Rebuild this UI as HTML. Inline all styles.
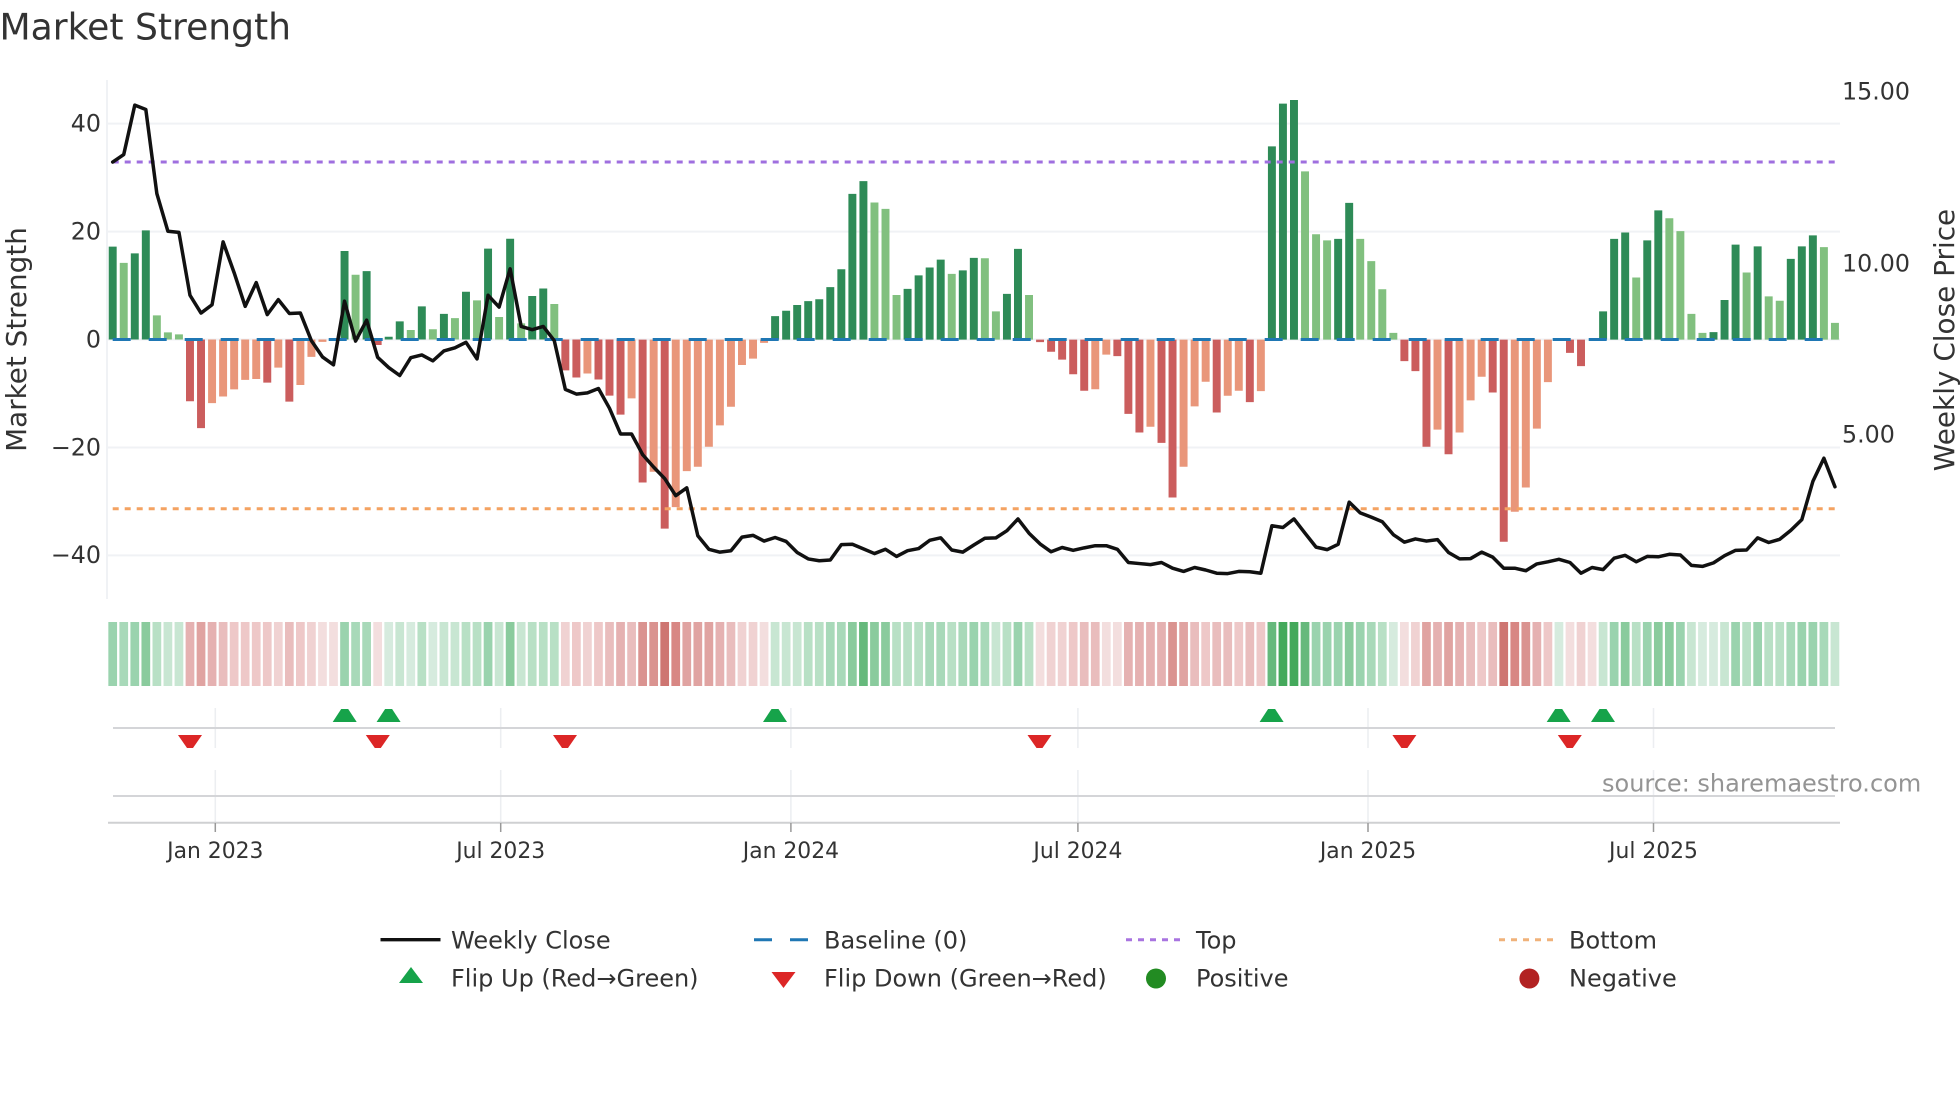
<!DOCTYPE html>
<html lang="en">
<head>
<meta charset="utf-8">
<title>Market Strength</title>
<style>
html,body{margin:0;padding:0;background:#fff;width:1960px;height:1102px;overflow:hidden}
svg{display:block}
text{font-family:"DejaVu Sans","Liberation Sans",sans-serif;fill:#333}
text.src{fill:#949494}
</style>
</head>
<body>
<svg width="1960" height="1102" viewBox="0 0 1960 1102" xmlns="http://www.w3.org/2000/svg">
<rect width="1960" height="1102" fill="#fff"/>
<text x="-0.5" y="39.5" font-size="36.1">Market Strength</text>

<!-- grid -->
<g stroke="#f0f2f5" stroke-width="2" fill="none">
<path d="M107 80V599"/>
<path d="M108 123.6H1840M108 231.6H1840M108 447.5H1840M108 555.4H1840M108 339.5H1840"/>
</g>

<!-- bars section 1 -->
<g transform="matrix(11.04 0 0 .39526 112.7 0)" fill="none" stroke-width=".72">
<path stroke="#2e8b57" d="M0 859V624M2 859V641M3 859V583M21 859V635M23 859V686M25 859V852M26 859V813M28 859V775M30 859V794M32 859V738M34 859V629M36 859V604M38 859V749M39 859V730"/>
<path stroke="#81c07f" d="M1 859V665M4 859V798M5 859V841M6 859V846M22 859V695M27 859V835M29 859V833M31 859V805M33 859V760M35 859V802M37 859V818M40 859V769"/>
<path stroke="#cb5d5d" d="M7 859V1015M8 859V1083M14 859V968M16 859V1016M24 859V873M41 859V937M42 859V955M44 859V960M45 859V1001M46 859V1049"/>
<path stroke="#e9967a" d="M9 859V1020M10 859V1003M11 859V985M12 859V961M13 859V959M15 859V930M17 859V974M18 859V903M19 859V865M43 859V945M47 859V1008"/>
</g>
<!-- bars section 2 -->
<g transform="matrix(11.04 0 0 .35714 112.7 60)" fill="none" stroke-width=".72">
<path stroke="#2e8b57" d="M60 783V717M61 783V702M62 783V686M63 783V675M64 783V670M65 783V636M66 783V586M67 783V375M68 783V339M72 783V641M73 783V603M74 783V581M75 783V559M77 783V589M78 783V554M81 783V655M82 783V529M105 783V242M106 783V122M107 783V112M111 783V501M112 783V400M135 783V704M136 783V501M137 783V483M139 783V505M140 783V421M145 783V762M146 783V672M147 783V517M149 783V522M152 783V557M153 783V522M154 783V491"/>
<path stroke="#81c07f" d="M69 783V399M70 783V417M71 783V658M76 783V599M79 783V555M80 783V704M83 783V658M108 783V312M109 783V488M110 783V505M113 783V501M114 783V563M115 783V642M116 783V764M138 783V609M141 783V443M142 783V479M143 783V711M144 783V764M148 783V595M150 783V662M151 783V674M155 783V524M156 783V736"/>
<path stroke="#cb5d5d" d="M48 783V1183M50 783V1312M84 783V790M85 783V817M86 783V839M87 783V880M88 783V926M91 783V829M92 783V991M93 783V1043M95 783V1072M96 783V1225M100 783V987M103 783V958M117 783V843M118 783V871M119 783V1083M121 783V1104M125 783V931M126 783V1349M132 783V820M133 783V857"/>
<path stroke="#e9967a" d="M49 783V1153M51 783V1252M52 783V1151M53 783V1139M54 783V1083M55 783V1023M56 783V971M57 783V854M58 783V836M59 783V792M89 783V922M90 783V825M94 783V1027M97 783V1139M98 783V970M99 783V901M101 783V940M102 783V926M104 783V927M120 783V1035M122 783V1043M123 783V953M124 783V887M127 783V1265M128 783V1197M129 783V1032M130 783V902"/>
</g>

<!-- reference lines -->
<path d="M112.7 339.5H1836" stroke="#1f77b4" stroke-width="3" stroke-dasharray="18 18" fill="none"/>
<path d="M112.7 162H1836" stroke="#9f6fdf" stroke-width="3" stroke-dasharray="6 6" fill="none"/>
<path d="M112.7 508.8H1836" stroke="#f4a261" stroke-width="3" stroke-dasharray="6 6" fill="none"/>

<!-- weekly close line -->
<g fill="none" stroke="#111" stroke-width="3.5" stroke-linejoin="round" stroke-linecap="round">
<path transform="matrix(11.04 0 0 .39526 112.7 0)" vector-effect="non-scaling-stroke" d="M0 410L1 391 2 266 3 277 4 490 5 585 6 588 7 747 8 792 9 771 10 612 11 690 12 775 13 715 14 796 15 758 16 793 17 792 18 862 19 903 20 923 21 762 22 863 23 810 24 904 25 930 26 950 27 905 28 898 29 913 30 888 31 880 32 866 33 908 34 747 35 777 36 680 37 826 38 834 39 826 40 862 41 985 42 997 43 994 44 983 45 1033 46 1098 47 1098 48 1150"/>
<path transform="matrix(11.04 0 0 .35714 112.7 60)" vector-effect="non-scaling-stroke" d="M48 1105L49 1140 50 1172 51 1220 52 1198 53 1332 54 1370 55 1378 56 1374 57 1336 58 1331 59 1347 60 1337 61 1348 62 1379 63 1397 64 1402 65 1400 66 1357 67 1356 68 1369 69 1382 70 1370 71 1390 72 1374 73 1368 74 1345 75 1338 76 1372 77 1378 78 1358 79 1339 80 1338 81 1318 82 1285 83 1325 84 1355 85 1377 86 1365 87 1373 88 1366 89 1360 90 1360 91 1370 92 1407 93 1410 94 1413 95 1407 96 1423 97 1432 98 1421 99 1428 100 1437 101 1438 102 1432 103 1433 104 1437 105 1304 106 1309 107 1285 108 1325 109 1364 110 1371 111 1356 112 1238 113 1268 114 1280 115 1293 116 1329 117 1350 118 1341 119 1347 120 1343 121 1379 122 1397 123 1396 124 1378 125 1392 126 1423 127 1423 128 1430 129 1411 130 1405 131 1398 132 1407 133 1437 134 1421 135 1427 136 1395 137 1387 138 1405 139 1390 140 1391 141 1384 142 1386 143 1415 144 1418 145 1408 146 1388 147 1373 148 1372 149 1338 150 1351 151 1342 152 1317 153 1287 154 1180 155 1115 156 1195"/>
</g>

<!-- y ticks -->
<g font-size="23.75" text-anchor="end">
<text x="101" y="131.6">40</text>
<text x="101" y="239.6">20</text>
<text x="101" y="347.5">0</text>
<text x="101" y="455.6">−20</text>
<text x="101" y="563.2">−40</text>
</g>
<text transform="translate(26 339.5) rotate(-90)" font-size="27.8" text-anchor="middle">Market Strength</text>
<g font-size="23.75">
<text x="1842" y="99.5">15.00</text>
<text x="1842" y="271.4">10.00</text>
<text x="1842" y="442.6">5.00</text>
</g>
<text transform="translate(1954 340) rotate(-90)" font-size="27.9" text-anchor="middle">Weekly Close Price</text>

<!-- heat strip -->
<g transform="translate(112.7 0) scale(11.04 1)" fill="none" stroke-width=".79">
<path stroke="#d6ebde" d="M25 622v64M27 622v64M29 622v64M116 622v64M131 622v64M144 622v64M145 622v64"/>
<path stroke="#c8e6d2" d="M5 622v64M6 622v64M26 622v64M30 622v64M31 622v64M35 622v64M37 622v64M60 622v64M61 622v64M62 622v64M80 622v64M135 622v64M143 622v64M146 622v64M156 622v64"/>
<path stroke="#b8e0c5" d="M4 622v64M28 622v64M32 622v64M33 622v64M38 622v64M39 622v64M40 622v64M63 622v64M64 622v64M71 622v64M72 622v64M73 622v64M76 622v64M81 622v64M83 622v64M115 622v64M138 622v64M148 622v64M150 622v64M151 622v64"/>
<path stroke="#a8d9b9" d="M1 622v64M22 622v64M23 622v64M65 622v64M66 622v64M74 622v64M75 622v64M77 622v64M79 622v64M114 622v64M152 622v64M155 622v64"/>
<path stroke="#9ad3ae" d="M0 622v64M2 622v64M21 622v64M34 622v64M78 622v64M82 622v64M109 622v64M110 622v64M111 622v64M113 622v64M136 622v64M139 622v64M142 622v64M147 622v64M149 622v64M153 622v64M154 622v64"/>
<path stroke="#8acb9d" d="M3 622v64M36 622v64M67 622v64M69 622v64M70 622v64M112 622v64M137 622v64M140 622v64M141 622v64"/>
<path stroke="#66b97c" d="M68 622v64M105 622v64M108 622v64"/>
<path stroke="#44a95b" d="M106 622v64M107 622v64"/>
<path stroke="#f3dede" d="M19 622v64M20 622v64M24 622v64M59 622v64M84 622v64M90 622v64M91 622v64M117 622v64M132 622v64M134 622v64"/>
<path stroke="#f0d2d2" d="M15 622v64M18 622v64M41 622v64M43 622v64M57 622v64M58 622v64M85 622v64M86 622v64M118 622v64M133 622v64"/>
<path stroke="#eec8c8" d="M11 622v64M12 622v64M13 622v64M14 622v64M17 622v64M42 622v64M44 622v64M87 622v64M99 622v64M102 622v64M104 622v64M124 622v64M130 622v64"/>
<path stroke="#e9bdbd" d="M10 622v64M16 622v64M45 622v64M47 622v64M56 622v64M88 622v64M89 622v64M98 622v64M100 622v64M101 622v64M103 622v64M123 622v64M125 622v64"/>
<path stroke="#e5b1b1" d="M7 622v64M9 622v64M46 622v64M55 622v64M92 622v64M93 622v64M94 622v64M95 622v64M120 622v64M122 622v64M129 622v64"/>
<path stroke="#e0a3a1" d="M8 622v64M52 622v64M53 622v64M54 622v64M97 622v64M119 622v64M121 622v64"/>
<path stroke="#da9390" d="M48 622v64M49 622v64M96 622v64M128 622v64"/>
<path stroke="#d88784" d="M51 622v64M127 622v64"/>
<path stroke="#ce7571" d="M50 622v64M126 622v64"/>
</g>

<!-- event panels -->
<g stroke="#eceef1" stroke-width="1.5" fill="none">
<path d="M215.3 708V748M215.3 770V822M500.7 708V748M500.7 770V822M790.9 708V748M790.9 770V822M1077.9 708V748M1077.9 770V822M1368 708V748M1368 770V822M1653.5 708V748M1653.5 770V822"/>
</g>
<path d="M113 728H1835M113 796H1835" stroke="#d4d5d8" stroke-width="2" fill="none"/>
<path d="M108 822.8H1840" stroke="#cfd0d2" stroke-width="2" fill="none"/>
<path d="M215.3 823V832M500.7 823V832M790.9 823V832M1077.9 823V832M1368 823V832M1653.5 823V832" stroke="#999" stroke-width="1.5" fill="none"/>

<g fill="#16a34a">
<polygon transform="translate(344.7 0)" points="-12,722 12,722 3.5,709 -3.5,709"/>
<polygon transform="translate(388.6 0)" points="-12,722 12,722 3.5,709 -3.5,709"/>
<polygon transform="translate(775 0)" points="-12,722 12,722 3.5,709 -3.5,709"/>
<polygon transform="translate(1271.6 0)" points="-12,722 12,722 3.5,709 -3.5,709"/>
<polygon transform="translate(1558.7 0)" points="-12,722 12,722 3.5,709 -3.5,709"/>
<polygon transform="translate(1603 0)" points="-12,722 12,722 3.5,709 -3.5,709"/>
</g>
<g fill="#dc2626">
<polygon transform="translate(190 0)" points="-12,735 12,735 3,748 -3,748"/>
<polygon transform="translate(377.8 0)" points="-12,735 12,735 3,748 -3,748"/>
<polygon transform="translate(565 0)" points="-12,735 12,735 3,748 -3,748"/>
<polygon transform="translate(1039.5 0)" points="-12,735 12,735 3,748 -3,748"/>
<polygon transform="translate(1404.4 0)" points="-12,735 12,735 3,748 -3,748"/>
<polygon transform="translate(1569.8 0)" points="-12,735 12,735 3,748 -3,748"/>
</g>

<text class="src" x="1602" y="791.7" font-size="24">source: sharemaestro.com</text>

<!-- x ticks -->
<g font-size="21.875" text-anchor="middle">
<text x="215.3" y="858">Jan 2023</text>
<text x="500.7" y="858">Jul 2023</text>
<text x="790.9" y="858">Jan 2024</text>
<text x="1077.9" y="858">Jul 2024</text>
<text x="1368" y="858">Jan 2025</text>
<text x="1653.5" y="858">Jul 2025</text>
</g>

<!-- legend -->
<path d="M380.5 939.7H440.5" stroke="#111" stroke-width="3.4" fill="none"/>
<path d="M754 939.7H808" stroke="#1f77b4" stroke-width="3" stroke-dasharray="18 18" fill="none"/>
<path d="M1126 939.7H1181" stroke="#a874e0" stroke-width="3" stroke-dasharray="6 6" fill="none"/>
<path d="M1499 939.7H1555" stroke="#f0b27a" stroke-width="3" stroke-dasharray="6 6" fill="none"/>
<polygon points="399,983 423,983 411,967" fill="#16a34a"/>
<polygon points="771.5,972 795.5,972 783.5,988" fill="#dc2626"/>
<circle cx="1156" cy="978.5" r="10" fill="#228b22"/>
<circle cx="1529.4" cy="978.5" r="10" fill="#b22222"/>
<g font-size="24">
<text x="451" y="948.3">Weekly Close</text>
<text x="824" y="948.3">Baseline (0)</text>
<text x="1196" y="948.3">Top</text>
<text x="1569" y="948.3">Bottom</text>
<text x="451" y="986.7">Flip Up (Red→Green)</text>
<text x="824" y="986.7">Flip Down (Green→Red)</text>
<text x="1196" y="986.7">Positive</text>
<text x="1569" y="986.7">Negative</text>
</g>
</svg>
</body>
</html>
